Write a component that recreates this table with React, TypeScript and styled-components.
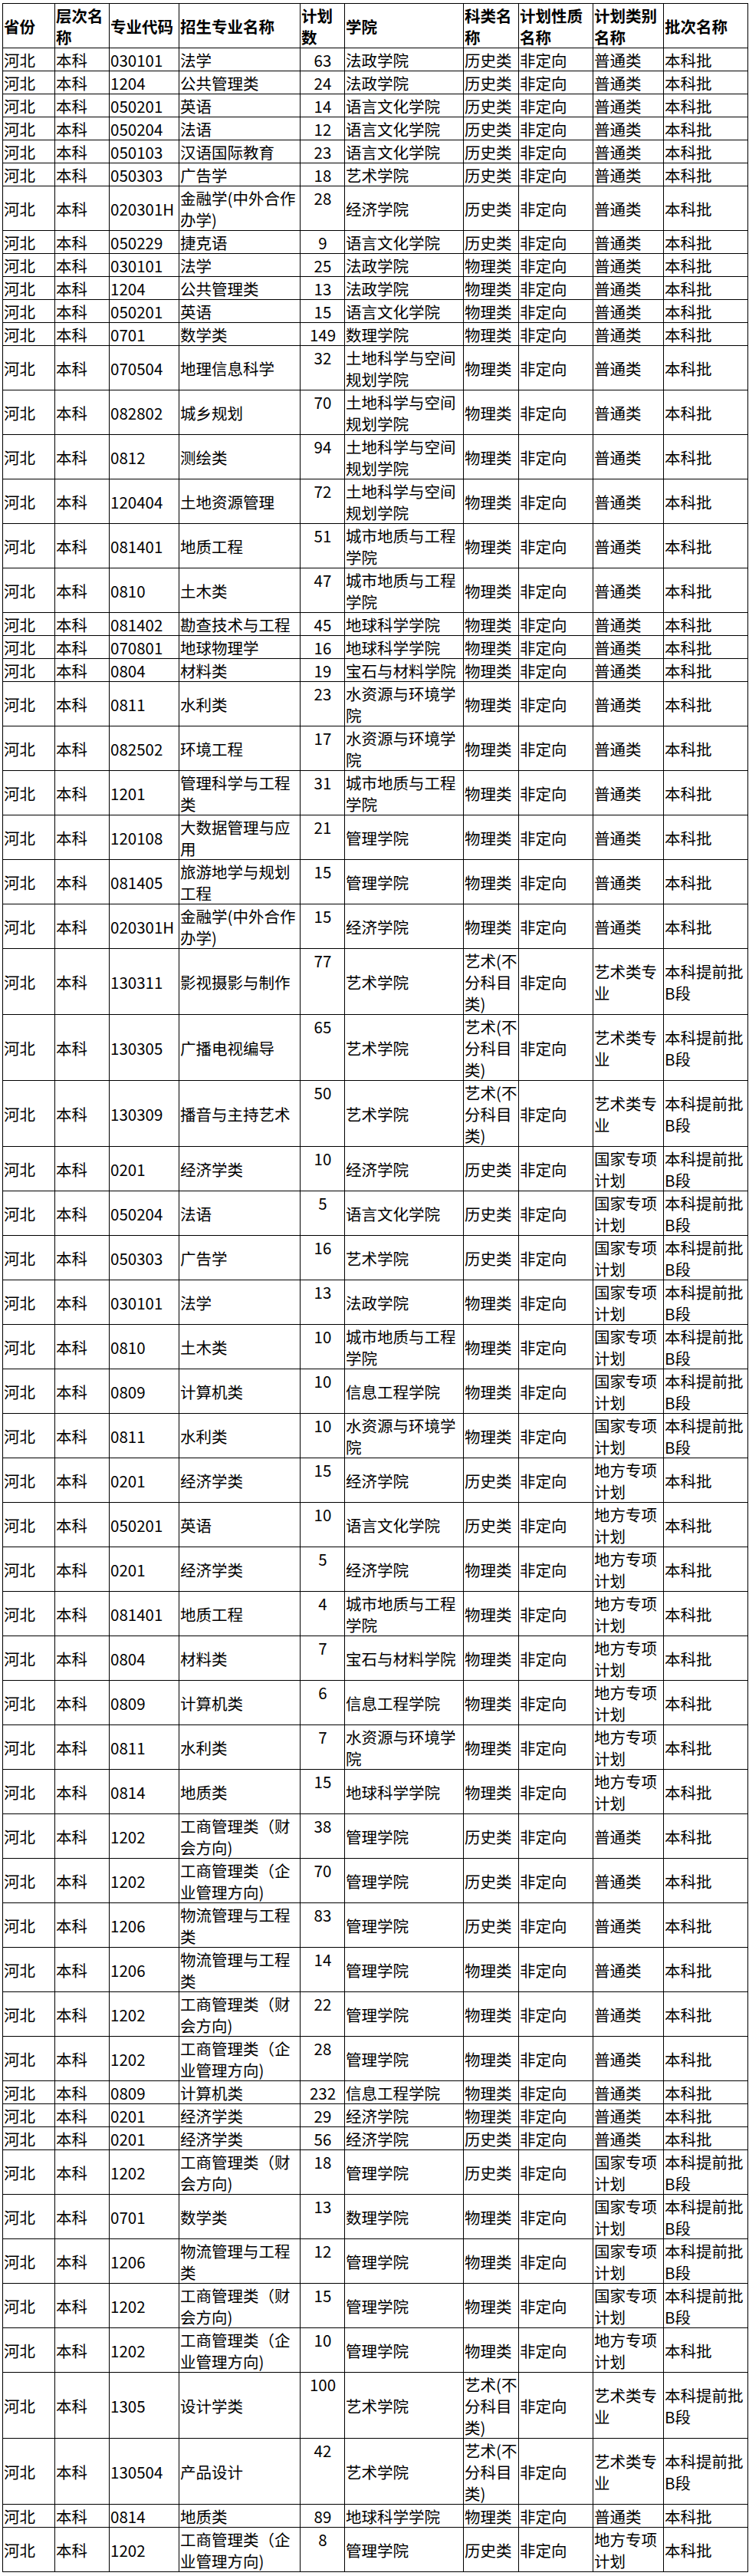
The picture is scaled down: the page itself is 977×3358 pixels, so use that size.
import React from "react";
import styled, { createGlobalStyle } from "styled-components";

const GlobalStyle = createGlobalStyle`
  html, body {
    margin: 0;
    background: #fff;
  }
  body {
    font-family: "Noto Sans CJK SC", "Microsoft YaHei", sans-serif;
    color: #000;
  }
`;

const Sheet = styled.table`
  margin: 4px 0 0 3px;
  width: 972px;
  table-layout: fixed;
  border-collapse: collapse;
  font-size: 20.5px;
  line-height: 28px;
`;

const Col = styled.col<{ $w: number }>`
  width: ${({ $w }) => $w}px;
`;

const HeadCell = styled.th`
  border: 1px solid #000;
  padding: 1px 0 0 1px;
  font-weight: 700;
  text-align: left;
  vertical-align: middle;
`;

const Cell = styled.td<{ $count?: boolean }>`
  border: 1px solid #000;
  padding: 1px 0 0 1px;
  font-weight: 400;
  text-align: ${({ $count }) => ($count ? "center" : "left")};
  vertical-align: ${({ $count }) => ($count ? "top" : "middle")};
`;

const widths = [68, 71, 91, 158, 58, 155, 72, 97, 92, 110];

const headers = [
  "省份",
  "层次名称",
  "专业代码",
  "招生专业名称",
  "计划数",
  "学院",
  "科类名称",
  "计划性质名称",
  "计划类别名称",
  "批次名称",
];

// subject groups
const H = "历史类";
const P = "物理类";
const A = "艺术(不分科目类)";
// plan categories
const PT = "普通类";
const GJ = "国家专项计划";
const DF = "地方专项计划";
const YS = "艺术类专业";
// batches
const BK = "本科批";
const TQ = "本科提前批B段";

const TD = "土地科学与空间规划学院";
const CS = "城市地质与工程学院";
const SZ = "水资源与环境学院";

type Row = [string, string, number, string, string, string, string];

const rows: Row[] = [
  ["030101", "法学", 63, "法政学院", H, PT, BK],
  ["1204", "公共管理类", 24, "法政学院", H, PT, BK],
  ["050201", "英语", 14, "语言文化学院", H, PT, BK],
  ["050204", "法语", 12, "语言文化学院", H, PT, BK],
  ["050103", "汉语国际教育", 23, "语言文化学院", H, PT, BK],
  ["050303", "广告学", 18, "艺术学院", H, PT, BK],
  ["020301H", "金融学(中外合作办学)", 28, "经济学院", H, PT, BK],
  ["050229", "捷克语", 9, "语言文化学院", H, PT, BK],
  ["030101", "法学", 25, "法政学院", P, PT, BK],
  ["1204", "公共管理类", 13, "法政学院", P, PT, BK],
  ["050201", "英语", 15, "语言文化学院", P, PT, BK],
  ["0701", "数学类", 149, "数理学院", P, PT, BK],
  ["070504", "地理信息科学", 32, TD, P, PT, BK],
  ["082802", "城乡规划", 70, TD, P, PT, BK],
  ["0812", "测绘类", 94, TD, P, PT, BK],
  ["120404", "土地资源管理", 72, TD, P, PT, BK],
  ["081401", "地质工程", 51, CS, P, PT, BK],
  ["0810", "土木类", 47, CS, P, PT, BK],
  ["081402", "勘查技术与工程", 45, "地球科学学院", P, PT, BK],
  ["070801", "地球物理学", 16, "地球科学学院", P, PT, BK],
  ["0804", "材料类", 19, "宝石与材料学院", P, PT, BK],
  ["0811", "水利类", 23, SZ, P, PT, BK],
  ["082502", "环境工程", 17, SZ, P, PT, BK],
  ["1201", "管理科学与工程类", 31, CS, P, PT, BK],
  ["120108", "大数据管理与应用", 21, "管理学院", P, PT, BK],
  ["081405", "旅游地学与规划工程", 15, "管理学院", P, PT, BK],
  ["020301H", "金融学(中外合作办学)", 15, "经济学院", P, PT, BK],
  ["130311", "影视摄影与制作", 77, "艺术学院", A, YS, TQ],
  ["130305", "广播电视编导", 65, "艺术学院", A, YS, TQ],
  ["130309", "播音与主持艺术", 50, "艺术学院", A, YS, TQ],
  ["0201", "经济学类", 10, "经济学院", H, GJ, TQ],
  ["050204", "法语", 5, "语言文化学院", H, GJ, TQ],
  ["050303", "广告学", 16, "艺术学院", H, GJ, TQ],
  ["030101", "法学", 13, "法政学院", P, GJ, TQ],
  ["0810", "土木类", 10, CS, P, GJ, TQ],
  ["0809", "计算机类", 10, "信息工程学院", P, GJ, TQ],
  ["0811", "水利类", 10, SZ, P, GJ, TQ],
  ["0201", "经济学类", 15, "经济学院", H, DF, BK],
  ["050201", "英语", 10, "语言文化学院", H, DF, BK],
  ["0201", "经济学类", 5, "经济学院", P, DF, BK],
  ["081401", "地质工程", 4, CS, P, DF, BK],
  ["0804", "材料类", 7, "宝石与材料学院", P, DF, BK],
  ["0809", "计算机类", 6, "信息工程学院", P, DF, BK],
  ["0811", "水利类", 7, SZ, P, DF, BK],
  ["0814", "地质类", 15, "地球科学学院", P, DF, BK],
  ["1202", "工商管理类（财会方向)", 38, "管理学院", H, PT, BK],
  ["1202", "工商管理类（企业管理方向)", 70, "管理学院", H, PT, BK],
  ["1206", "物流管理与工程类", 83, "管理学院", H, PT, BK],
  ["1206", "物流管理与工程类", 14, "管理学院", P, PT, BK],
  ["1202", "工商管理类（财会方向)", 22, "管理学院", P, PT, BK],
  ["1202", "工商管理类（企业管理方向)", 28, "管理学院", P, PT, BK],
  ["0809", "计算机类", 232, "信息工程学院", P, PT, BK],
  ["0201", "经济学类", 29, "经济学院", P, PT, BK],
  ["0201", "经济学类", 56, "经济学院", H, PT, BK],
  ["1202", "工商管理类（财会方向)", 18, "管理学院", H, GJ, TQ],
  ["0701", "数学类", 13, "数理学院", P, GJ, TQ],
  ["1206", "物流管理与工程类", 12, "管理学院", P, GJ, TQ],
  ["1202", "工商管理类（财会方向)", 15, "管理学院", P, GJ, TQ],
  ["1202", "工商管理类（企业管理方向)", 10, "管理学院", P, DF, BK],
  ["1305", "设计学类", 100, "艺术学院", A, YS, TQ],
  ["130504", "产品设计", 42, "艺术学院", A, YS, TQ],
  ["0814", "地质类", 89, "地球科学学院", P, PT, BK],
  ["1202", "工商管理类（企业管理方向)", 8, "管理学院", H, DF, BK],
];

export default function App() {
  return (
    <>
      <GlobalStyle />
      <Sheet>
        <colgroup>
          {widths.map((w, i) => (
            <Col key={i} $w={w} />
          ))}
        </colgroup>
        <thead>
          <tr>
            {headers.map((h) => (
              <HeadCell key={h}>{h}</HeadCell>
            ))}
          </tr>
        </thead>
        <tbody>
          {rows.map(([code, name, count, college, subject, kind, batch], i) => (
            <tr key={i}>
              <Cell>河北</Cell>
              <Cell>本科</Cell>
              <Cell>{code}</Cell>
              <Cell>{name}</Cell>
              <Cell $count>{count}</Cell>
              <Cell>{college}</Cell>
              <Cell>{subject}</Cell>
              <Cell>非定向</Cell>
              <Cell>{kind}</Cell>
              <Cell>{batch}</Cell>
            </tr>
          ))}
        </tbody>
      </Sheet>
    </>
  );
}
